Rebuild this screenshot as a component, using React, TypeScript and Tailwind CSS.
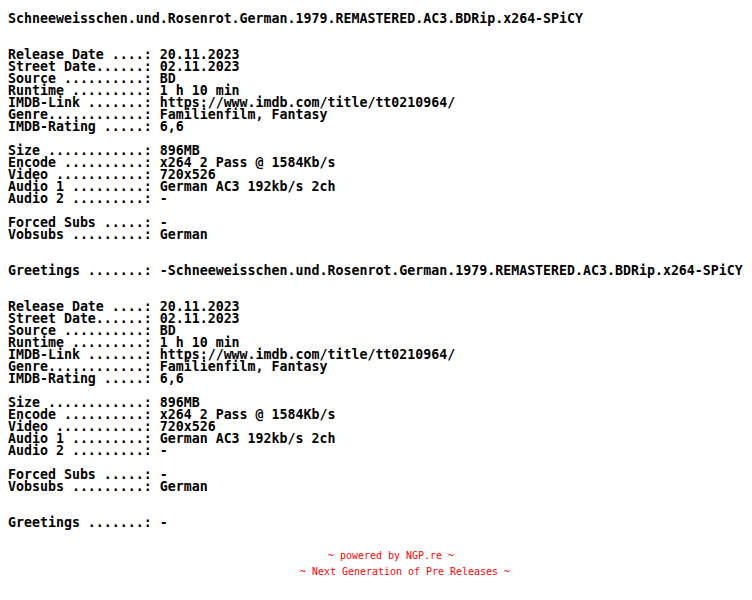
const release = "Schneeweisschen.und.Rosenrot.German.1979.REMASTERED.AC3.BDRip.x264-SPiCY";

const block = (greet: string) => `Release Date ....: 20.11.2023
Street Date......: 02.11.2023
Source ..........: BD
Runtime .........: 1 h 10 min
IMDB-Link .......: https://www.imdb.com/title/tt0210964/
Genre............: Familienfilm, Fantasy
IMDB-Rating .....: 6,6

Size ............: 896MB
Encode ..........: x264 2 Pass @ 1584Kb/s
Video ...........: 720x526
Audio 1 .........: German AC3 192kb/s 2ch
Audio 2 .........: -

Forced Subs .....: -
Vobsubs .........: German


Greetings .......: ${greet}`;

const nfo = `
${release}


${block("-" + release)}


${block("-")}`;

export default function App() {
  return (
    <main className="min-h-screen bg-white text-black">
      {/* nfo text */}
      <pre className="px-2 pt-px font-['DejaVu_Sans_Mono',monospace] font-bold text-[13.28px] leading-[12px] whitespace-pre">
        {nfo}
      </pre>

      {/* footer */}
      <div className="mt-[19px] font-['DejaVu_Sans_Mono',monospace] text-[9.97px] leading-[16px] text-[#ff0000] whitespace-pre">
        <div className="pl-[328px]">~ powered by NGP.re ~</div>
        <div className="pl-[300px]">~ Next Generation of Pre Releases ~</div>
      </div>
    </main>
  );
}
